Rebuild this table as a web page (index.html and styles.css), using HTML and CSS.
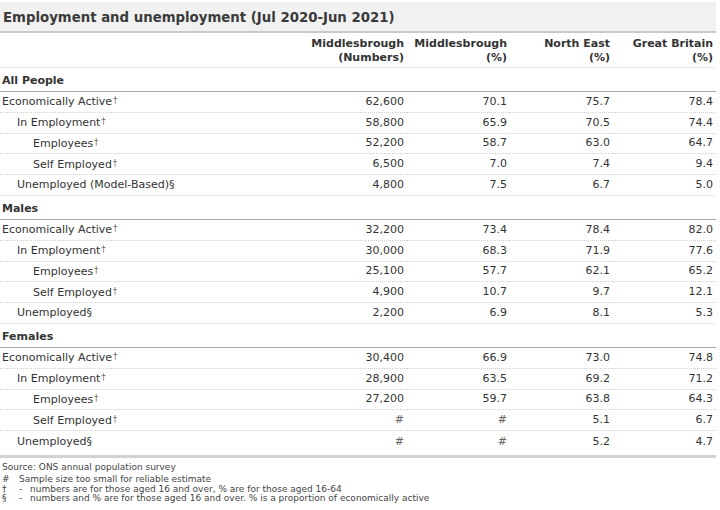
FILE: index.html
```html
<!DOCTYPE html>
<html>
<head>
<meta charset="utf-8">
<link rel="stylesheet" href="styles.css">
</head>
<body>
<div class="panel">
  <h1 class="title">Employment and unemployment (Jul 2020-Jun 2021)</h1>
  <table class="data">
    <colgroup>
      <col class="c-label"><col class="c-val"><col class="c-val"><col class="c-val"><col class="c-val">
    </colgroup>
    <thead>
      <tr class="head">
        <th></th>
        <th>Middlesbrough<br>(Numbers)</th>
        <th>Middlesbrough<br>(%)</th>
        <th>North East<br>(%)</th>
        <th>Great Britain<br>(%)</th>
      </tr>
    </thead>
    <tbody>
      <tr class="section"><td colspan="5">All People</td></tr>
      <tr><td class="l1">Economically Active<span class="mk">†</span></td><td>62,600</td><td>70.1</td><td>75.7</td><td>78.4</td></tr>
      <tr><td class="l2">In Employment<span class="mk">†</span></td><td>58,800</td><td>65.9</td><td>70.5</td><td>74.4</td></tr>
      <tr><td class="l3">Employees<span class="mk">†</span></td><td>52,200</td><td>58.7</td><td>63.0</td><td>64.7</td></tr>
      <tr><td class="l3">Self Employed<span class="mk">†</span></td><td>6,500</td><td>7.0</td><td>7.4</td><td>9.4</td></tr>
      <tr class="last"><td class="l2">Unemployed (Model-Based)§</td><td>4,800</td><td>7.5</td><td>6.7</td><td>5.0</td></tr>

      <tr class="section"><td colspan="5">Males</td></tr>
      <tr><td class="l1">Economically Active<span class="mk">†</span></td><td>32,200</td><td>73.4</td><td>78.4</td><td>82.0</td></tr>
      <tr><td class="l2">In Employment<span class="mk">†</span></td><td>30,000</td><td>68.3</td><td>71.9</td><td>77.6</td></tr>
      <tr><td class="l3">Employees<span class="mk">†</span></td><td>25,100</td><td>57.7</td><td>62.1</td><td>65.2</td></tr>
      <tr><td class="l3">Self Employed<span class="mk">†</span></td><td>4,900</td><td>10.7</td><td>9.7</td><td>12.1</td></tr>
      <tr class="last"><td class="l2">Unemployed§</td><td>2,200</td><td>6.9</td><td>8.1</td><td>5.3</td></tr>

      <tr class="section"><td colspan="5">Females</td></tr>
      <tr><td class="l1">Economically Active<span class="mk">†</span></td><td>30,400</td><td>66.9</td><td>73.0</td><td>74.8</td></tr>
      <tr><td class="l2">In Employment<span class="mk">†</span></td><td>28,900</td><td>63.5</td><td>69.2</td><td>71.2</td></tr>
      <tr><td class="l3">Employees<span class="mk">†</span></td><td>27,200</td><td>59.7</td><td>63.8</td><td>64.3</td></tr>
      <tr><td class="l3">Self Employed<span class="mk">†</span></td><td class="na">#</td><td class="na">#</td><td>5.1</td><td>6.7</td></tr>
      <tr class="last end"><td class="l2">Unemployed§</td><td class="na">#</td><td class="na">#</td><td>5.2</td><td>4.7</td></tr>
    </tbody>
  </table>
  <div class="notes">
    <p class="source">Source: ONS annual population survey</p>
    <ul class="keys">
      <li><span class="sym">#</span><span class="txt">Sample size too small for reliable estimate</span></li>
      <li><span class="sym">†</span><span class="dash">-</span><span class="txt">numbers are for those aged 16 and over, % are for those aged 16-64</span></li>
      <li><span class="sym">§</span><span class="dash">-</span><span class="txt">numbers and % are for those aged 16 and over. % is a proportion of economically active</span></li>
    </ul>
  </div>
</div>
</body>
</html>
```

FILE: styles.css
```css
html, body {
  margin: 0;
  padding: 0;
  background: #ffffff;
}

body {
  font-family: "DejaVu Sans", Verdana, sans-serif;
  color: #333333;
}

.panel {
  width: 716px;
  padding-top: 2px;
}

.title {
  margin: 0;
  height: 29px;
  line-height: 31px;
  padding-left: 3px;
  background: #f1f1f1;
  border-bottom: 2px solid #c9c9c9;
  font-size: 13.3px;
  font-weight: bold;
  color: #3a3a3a;
}

.data {
  width: 716px;
  border-collapse: collapse;
  table-layout: fixed;
  font-size: 11px;
}

.c-label { width: 304px; }
.c-val { width: 103px; }

.data td, .data th {
  padding: 0 3px 0 0;
  text-align: right;
  white-space: nowrap;
}

.head th {
  font-weight: bold;
  line-height: 14px;
  padding-top: 4px;
  padding-bottom: 2px;
  border-bottom: 1px solid #ececec;
  color: #333333;
}

.data tbody tr td {
  height: 19.8px;
  line-height: 14px;
  border-bottom: 1px dotted #cfcfcf;
}

.data tbody tr.last td {
  border-bottom: 1px solid #ececec;
}

.data tbody tr.end td {
  height: 20px;
  vertical-align: top;
  padding-top: 4px;
  border-bottom: 3px solid #d2d2d2;
}

.data tbody tr.section td {
  text-align: left;
  font-weight: bold;
  height: 20px;
  vertical-align: bottom;
  padding: 0 0 3px 2px;
  border-bottom: 1px solid #a9a9a9;
}

.data td.l1 { text-align: left; padding-left: 2px; }
.data td.l2 { text-align: left; padding-left: 17px; }
.data td.l3 { text-align: left; padding-left: 33px; }

.mk {
  font-size: 8px;
  vertical-align: 2px;
  color: #666666;
  padding-left: 1px;
}

.na {
  color: #666666;
}

.notes {
  font-size: 9px;
  color: #444444;
  padding-top: 4px;
  padding-left: 2px;
  border-bottom: 1px dotted #cfcfcf;
  padding-bottom: 6px;
}

.source {
  margin: 0 0 2px 0;
  line-height: 11px;
}

.keys {
  list-style: none;
  margin: 0;
  padding: 0;
}

.keys li {
  display: flex;
  line-height: 9.5px;
}

.sym {
  width: 17px;
  flex: none;
}

.dash {
  width: 11px;
  flex: none;
}
```
